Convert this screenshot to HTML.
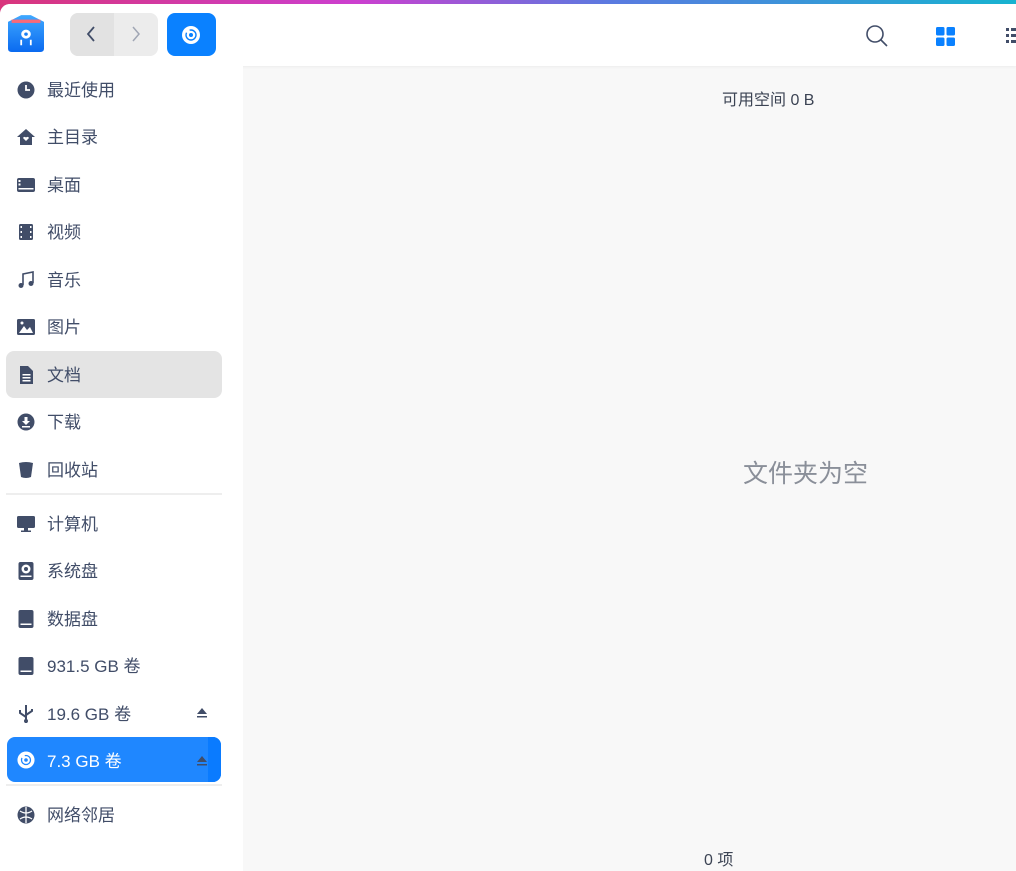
<!DOCTYPE html>
<html><head><meta charset="utf-8"><style>
*{margin:0;padding:0;box-sizing:border-box}
body{width:1016px;height:871px;overflow:hidden;background:linear-gradient(90deg,#d8357c 0%,#cc3fcf 35%,#5a7ae0 60%,#17b3d0 100%);font-family:"Liberation Sans","Noto Sans CJK SC",sans-serif;position:relative}
.win{position:absolute;left:0;top:4px;width:1016px;height:867px;background:#f8f8f8;border-top-left-radius:10px;overflow:hidden}
.hdr{position:absolute;left:0;top:0;width:1016px;height:62px;background:#fff;box-shadow:0 1px 3px rgba(0,0,0,.05)}
.side{position:absolute;left:0;top:61px;width:243px;height:806px;background:#fff}
.it{position:absolute;left:6px;width:216px;height:46px;font-size:17px;color:#414d68}
.it svg{position:absolute;left:11px;top:15px}
.it span{position:absolute;left:41px;top:13px;line-height:24px}
.sep{position:absolute;left:6px;width:216px;height:2px;background:#eee}
</style></head><body>
<div class="win">
<div class="hdr">
 <svg style="position:absolute;left:8px;top:10px" width="36" height="38" viewBox="3 1 30 34" preserveAspectRatio="none"><defs><linearGradient id="g" x1="0" y1="0" x2="0" y2="1"><stop offset="0" stop-color="#3fa8ff"/><stop offset="1" stop-color="#0a6af0"/></linearGradient></defs><path d="M3 8 L14 2 H22 L33 8 V32 Q33 35 30 35 H6 Q3 35 3 32Z" fill="url(#g)"/><rect x="6" y="6" width="24" height="3" fill="#f86a7a"/><circle cx="18" cy="19" r="4" fill="#fff"/><circle cx="18" cy="19" r="1.5" fill="#1a7ef5"/><path d="M14 24v5M22 24v5" stroke="#fff" stroke-width="1.5"/></svg>
 <div style="position:absolute;left:70px;top:9px;width:88px;height:43px;border-radius:8px;background:#ececec;overflow:hidden"><div style="width:44px;height:43px;background:#e2e2e2"></div></div>
 <svg style="position:absolute;left:84px;top:21px" width="14" height="18"><path d="M10 2 L4 9 L10 16" stroke="#414d68" stroke-width="1.8" fill="none"/></svg>
 <svg style="position:absolute;left:129px;top:21px" width="14" height="18"><path d="M4 2 L10 9 L4 16" stroke="#a0a6b4" stroke-width="1.5" fill="none"/></svg>
 <div style="position:absolute;left:167px;top:9px;width:49px;height:43px;border-radius:8px;background:#0a81ff"></div>
 <svg style="position:absolute;left:181px;top:21px" width="20" height="20" viewBox="0 0 20 20"><circle cx="10" cy="10" r="9" fill="#fff"/><circle cx="10" cy="10" r="5" fill="none" stroke="#0a81ff" stroke-width="1.4" stroke-dasharray="18 4"/><circle cx="10" cy="10" r="2" fill="#0a81ff"/></svg>
 <svg style="position:absolute;left:865px;top:20px" width="24" height="24"><circle cx="10" cy="10" r="8" fill="none" stroke="#414d68" stroke-width="1.6"/><path d="M16 16 L22 22" stroke="#414d68" stroke-width="1.6"/></svg>
 <svg style="position:absolute;left:936px;top:23px" width="20" height="20"><rect x="0" y="0" width="8.5" height="8.5" rx="1.5" fill="#0a81ff"/><rect x="10.5" y="0" width="8.5" height="8.5" rx="1.5" fill="#0a81ff"/><rect x="0" y="10.5" width="8.5" height="8.5" rx="1.5" fill="#0a81ff"/><rect x="10.5" y="10.5" width="8.5" height="8.5" rx="1.5" fill="#0a81ff"/></svg>
 <svg style="position:absolute;left:1006px;top:24px" width="10" height="20"><g fill="#414d68"><rect x="0" y="0" width="3" height="3"/><rect x="5" y="0" width="5" height="3"/><rect x="0" y="6" width="3" height="3"/><rect x="5" y="6" width="5" height="3"/><rect x="0" y="12" width="3" height="3"/><rect x="5" y="12" width="5" height="3"/></g></svg>
</div>
<div class="side">
 <div class="it" style="top:1px"><svg width="18" height="18"><circle cx="9" cy="9" r="8.5" fill="#414d68"/><path d="M9 4v5h4" stroke="#fff" stroke-width="1.8" fill="none"/></svg><span>最近使用</span></div>
 <div class="it" style="top:48px"><svg width="18" height="18"><path d="M9 1 L18 9 H15 V17 H3 V9 H0Z" fill="#414d68"/><path d="M9 13 L6 10 Q7 8 9 9.5 Q11 8 12 10Z" fill="#fff"/></svg><span>主目录</span></div>
 <div class="it" style="top:96px"><svg width="18" height="18"><rect x="0" y="2" width="18" height="14" rx="2" fill="#414d68"/><rect x="1.5" y="12" width="15" height="1.5" fill="#fff"/><rect x="1.5" y="4" width="2" height="2" fill="#fff"/><rect x="1.5" y="7.5" width="2" height="2" fill="#fff"/></svg><span>桌面</span></div>
 <div class="it" style="top:143px"><svg width="18" height="18"><rect x="2" y="1" width="14" height="16" rx="1.5" fill="#414d68"/><g fill="#fff"><rect x="3.5" y="3" width="1.5" height="2"/><rect x="3.5" y="8" width="1.5" height="2"/><rect x="3.5" y="13" width="1.5" height="2"/><rect x="13" y="3" width="1.5" height="2"/><rect x="13" y="8" width="1.5" height="2"/><rect x="13" y="13" width="1.5" height="2"/></g></svg><span>视频</span></div>
 <div class="it" style="top:191px"><svg width="18" height="18"><path d="M6 14V3 L16 1 V12" stroke="#414d68" stroke-width="1.6" fill="none"/><circle cx="4" cy="14.5" r="2.5" fill="#414d68"/><circle cx="14" cy="12.5" r="2.5" fill="#414d68"/></svg><span>音乐</span></div>
 <div class="it" style="top:238px"><svg width="18" height="18"><rect x="0" y="1" width="18" height="16" rx="1.5" fill="#414d68"/><path d="M2 15 L7 8 L10 12 L13 9 L16 15Z" fill="#fff"/><circle cx="5" cy="5" r="1.5" fill="#fff"/></svg><span>图片</span></div>
 <div class="it" style="top:286px;background:#e4e4e4;border-radius:8px;height:47px"><svg width="18" height="18"><path d="M3 0 H11 L16 5 V18 H3Z" fill="#414d68"/><g fill="#fff"><rect x="5.5" y="8" width="8" height="1.5"/><rect x="5.5" y="11" width="8" height="1.5"/><rect x="5.5" y="14" width="8" height="1.5"/></g></svg><span>文档</span></div>
 <div class="it" style="top:333px"><svg width="18" height="18"><circle cx="9" cy="9" r="8.5" fill="#414d68"/><path d="M5 8 H13 L9 12Z M7.5 4 H10.5 V8 H7.5Z" fill="#fff"/><rect x="5" y="13" width="8" height="1.5" fill="#fff"/></svg><span>下载</span></div>
 <div class="it" style="top:381px"><svg width="18" height="18"><path d="M2 2 Q9 0 16 2 L14 16 Q9 18 4 16Z" fill="#414d68"/></svg><span>回收站</span></div>
 <div class="sep" style="top:428px"></div>
 <div class="it" style="top:435px"><svg width="18" height="18"><rect x="0" y="1" width="18" height="12" rx="1.5" fill="#414d68"/><rect x="7" y="13" width="4" height="3" fill="#414d68"/><rect x="4" y="15.5" width="10" height="1.5" fill="#414d68"/></svg><span>计算机</span></div>
 <div class="it" style="top:482px"><svg width="18" height="18"><rect x="1.5" y="0" width="15" height="18" rx="2" fill="#414d68"/><circle cx="9" cy="7" r="4.5" fill="#fff"/><circle cx="9" cy="7" r="2" fill="#414d68"/><rect x="3.5" y="13.5" width="11" height="1.5" fill="#fff"/></svg><span>系统盘</span></div>
 <div class="it" style="top:530px"><svg width="18" height="18"><rect x="1.5" y="0" width="15" height="18" rx="2" fill="#414d68"/><rect x="3.5" y="13.5" width="11" height="1.5" fill="#fff"/></svg><span>数据盘</span></div>
 <div class="it" style="top:577px"><svg width="18" height="18"><rect x="1.5" y="0" width="15" height="18" rx="2" fill="#414d68"/><rect x="3.5" y="13.5" width="11" height="1.5" fill="#fff"/></svg><span>931.5 GB 卷</span></div>
 <div class="it" style="top:625px"><svg width="18" height="18"><path d="M9 0 V18 M9 12 L3 8 V5 M9 10 L15 6 V4" stroke="#414d68" stroke-width="2" fill="none"/><circle cx="9" cy="16" r="2" fill="#414d68"/></svg><span>19.6 GB 卷</span><svg style="left:190px;top:17px" width="12" height="12"><path d="M6 1 L11 7 H1Z M1 9 H11 V10.5 H1Z" fill="#414d68"/></svg></div>
 <div class="it" style="top:672px;left:7px;width:214px;height:45px;background:#1f87ff;border-radius:8px;color:#fff;overflow:hidden"><div style="position:absolute;right:0;top:0;width:13px;height:45px;background:#0a7bff"></div><svg style="left:10px;top:14px" width="18" height="18" viewBox="0 0 20 20"><circle cx="10" cy="10" r="9.5" fill="#fff"/><circle cx="10" cy="10" r="5" fill="none" stroke="#1f87ff" stroke-width="1.4" stroke-dasharray="18 4"/><circle cx="10" cy="10" r="2" fill="#1f87ff"/></svg><span style="left:40px">7.3 GB 卷</span><svg style="left:189px;top:18px" width="12" height="12"><path d="M6 1 L11 7 H1Z M1 9 H11 V10.5 H1Z" fill="#414d68"/></svg></div>
 <div class="sep" style="top:719px"></div>
 <div class="it" style="top:726px"><svg width="18" height="18"><circle cx="9" cy="9" r="8.5" fill="#414d68"/><path d="M3 5 Q9 9 15 5 M3 13 Q9 9 15 13 M9 1 V17" stroke="#fff" stroke-width="1.3" fill="none"/></svg><span>网络邻居</span></div>
</div>
<div style="position:absolute;left:722px;top:82px;font-size:16px;color:#3c4454">可用空间 0 B</div>
<div style="position:absolute;left:743px;top:450px;font-size:25px;color:#8a8f99">文件夹为空</div>
<div style="position:absolute;left:704px;top:842px;font-size:16px;color:#3c4454">0 项</div>
</div>
</body></html>
